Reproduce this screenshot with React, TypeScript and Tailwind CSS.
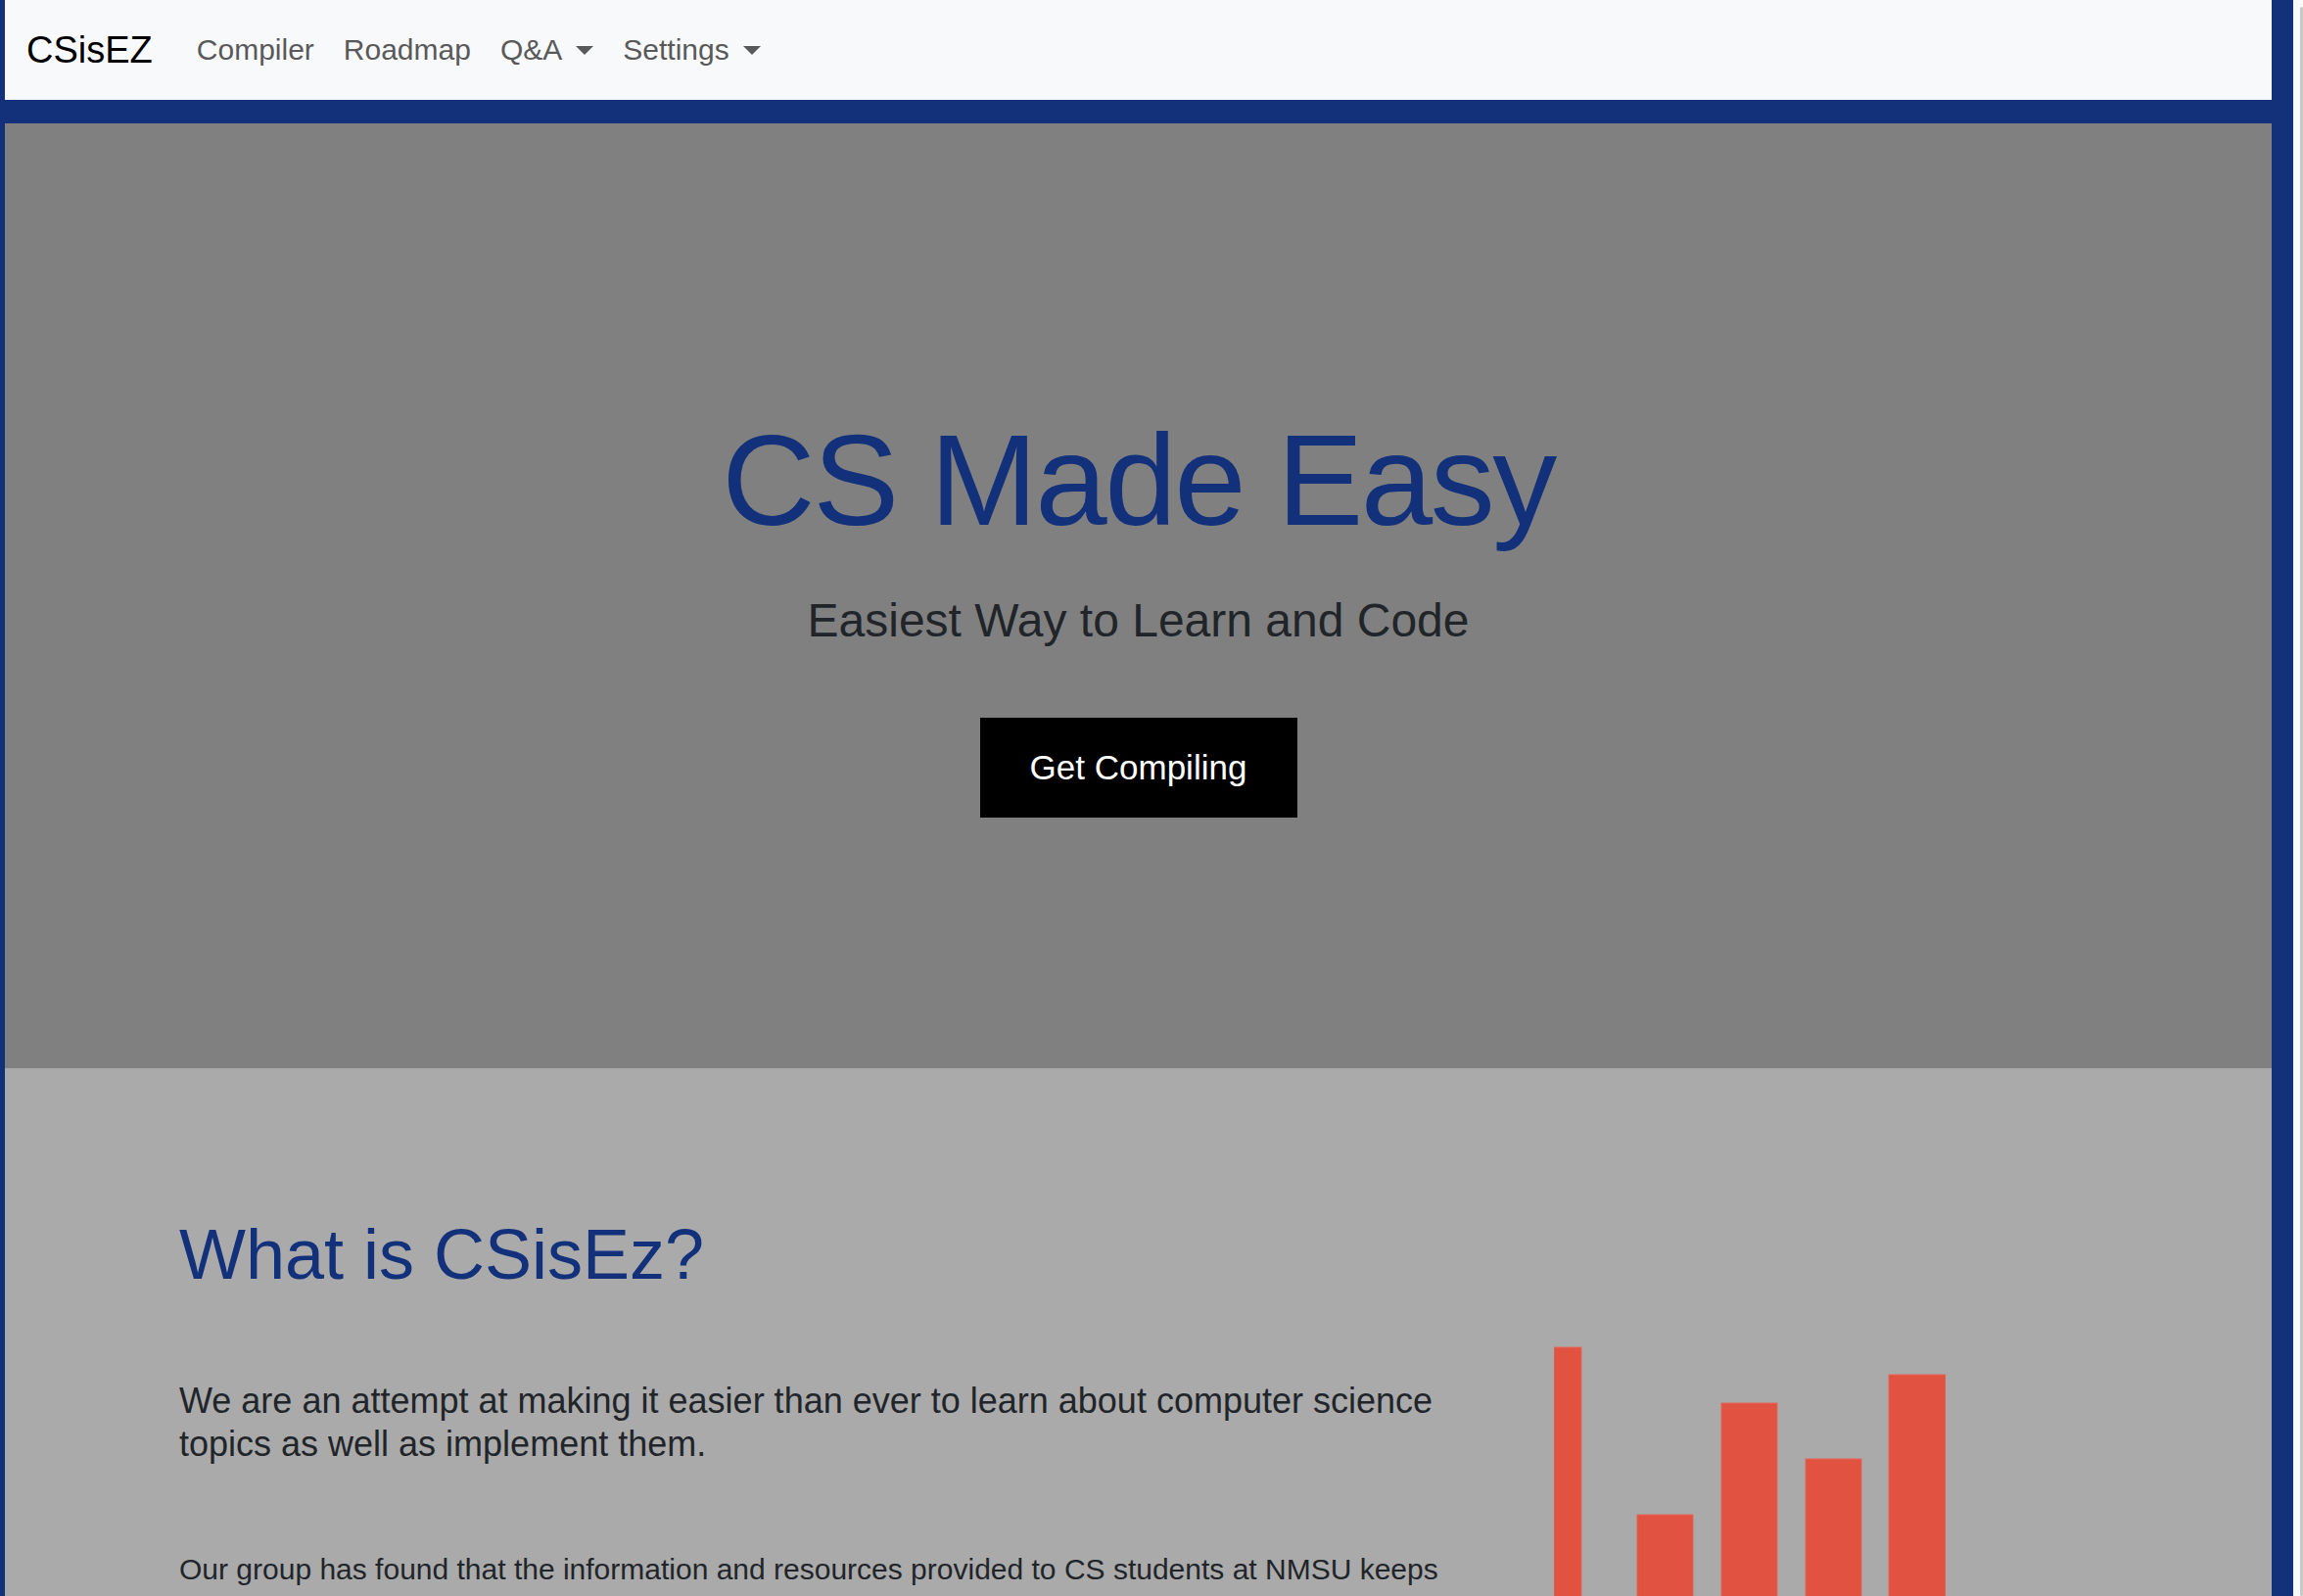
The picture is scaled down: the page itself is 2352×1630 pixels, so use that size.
import React from 'react';

const navLinks = [
  { label: 'Compiler', dropdown: false },
  { label: 'Roadmap', dropdown: false },
  { label: 'Q&A', dropdown: true },
  { label: 'Settings', dropdown: true },
];

// bar chart on the right of the intro section
const bars = [
  { x: 0, w: 28, top: 36 },
  { x: 85, w: 57, top: 207 },
  { x: 171, w: 57, top: 93 },
  { x: 257, w: 57, top: 150 },
  { x: 342, w: 58, top: 64 },
];

const Caret: React.FC = () => (
  <span className="ml-[14px] inline-block h-0 w-0 border-t-[9px] border-x-[9px] border-t-[#59595a] border-x-transparent" />
);

const App: React.FC = () => {
  return (
    <div className="flex h-screen w-full overflow-hidden font-['Liberation_Sans',Arial,sans-serif]">
      <div className="flex-1 bg-[#12317a] pl-[5px] pr-[22px]">
        {/* Navbar */}
        <nav className="flex h-[102px] items-center bg-[#f8f9fa] px-[22px]">
          <a className="mr-[30px] text-[38px] leading-none text-black">CSisEZ</a>
          <div className="flex items-center">
            {navLinks.map(link => (
              <a key={link.label} className="flex items-center px-[15px] text-[30px] leading-none text-[#59595a]">
                {link.label}
                {link.dropdown && <Caret />}
              </a>
            ))}
          </div>
        </nav>

        {/* Hero */}
        <section className="mt-[24px] flex h-[965px] flex-col items-center bg-[#808080] pt-[286px]">
          <h1 className="text-[132px] font-normal leading-[1.2] tracking-[-2.5px] text-[#12317a]">CS Made Easy</h1>
          <p className="mt-[28px] text-[48px] leading-[1.5] text-[#212529]">Easiest Way to Learn and Code</p>
          <button className="mt-[63px] flex h-[102px] w-[324px] items-center justify-center bg-black text-[35px] text-white">
            Get Compiling
          </button>
        </section>

        {/* About */}
        <section className="flex bg-[#aaaaaa] pl-[178px] pt-[147px] pb-[200px]">
          <div className="w-[1300px] shrink-0">
            <h2 className="text-[72px] font-normal leading-[1.2] text-[#12317a]">What is CSisEz?</h2>
            <p className="mt-[85px] text-[36px] leading-[44px] text-[#212529]">
              We are an attempt at making it easier than ever to learn about computer science topics as well as implement them.
            </p>
            <p className="mt-[83px] text-[30px] leading-[45px] text-[#212529]">
              Our group has found that the information and resources provided to CS students at NMSU keeps changing and is spread across many places.
            </p>
          </div>
          <div className="ml-[104px] mt-[102px]">
            <svg width="400" height="420" viewBox="0 0 400 420">
              {bars.map((b, i) => (
                <rect key={i} x={b.x} y={b.top} width={b.w} height={420 - b.top} fill="#e15241" stroke="#e0675a" strokeWidth="1" />
              ))}
            </svg>
          </div>
        </section>
      </div>

      {/* scrollbar strip */}
      <div className="flex w-[10px] justify-end bg-[#fafafa] pt-[7px]">
        <div className="h-full w-[3px] rounded-full bg-[#c8c8c8]" />
      </div>
    </div>
  );
};

export default App;
